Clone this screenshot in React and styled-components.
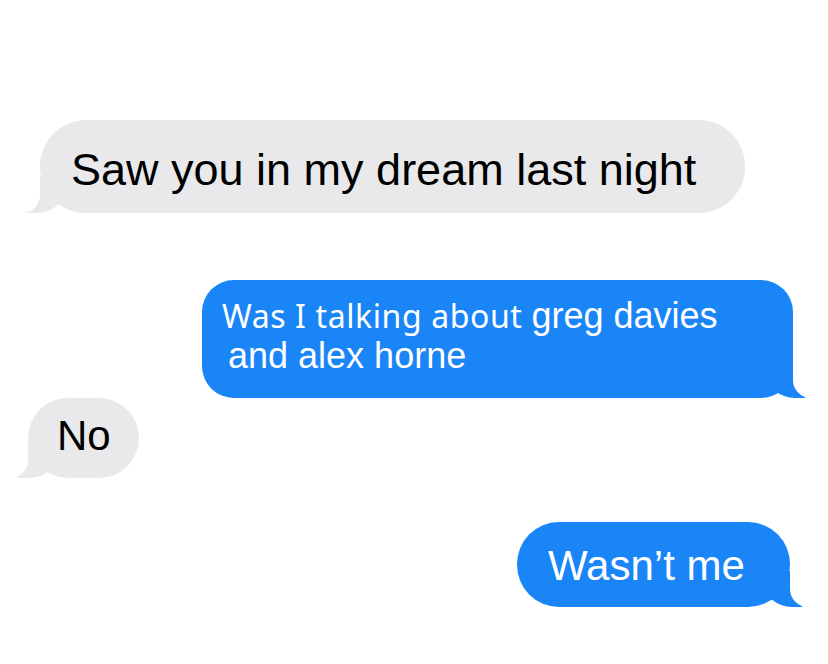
import React from 'react';
import styled, { createGlobalStyle, css } from 'styled-components';

const GlobalStyle = createGlobalStyle`
  html, body {
    margin: 0;
    padding: 0;
    background: #ffffff;
    overflow: hidden;
  }
  * {
    box-sizing: border-box;
  }
`;

const GRAY = '#e9e9eb';
const BLUE = '#1a85f7';

const Thread = styled.div`
  width: 828px;
  height: 664px;
  padding-top: 120px;
  display: flex;
  flex-direction: column;
  font-family: "Liberation Sans", Arial, sans-serif;
  background: #ffffff;
`;

const Row = styled.div`
  display: flex;
  justify-content: ${(p) => (p.$mine ? 'flex-end' : 'flex-start')};
  margin-top: ${(p) => p.$top || 0}px;
`;

const leftTail = css`
  &::before {
    content: '';
    position: absolute;
    bottom: 0;
    left: ${(p) => -p.$tip}px;
    width: 40px;
    height: 36px;
    background: ${GRAY};
    border-bottom-right-radius: 28px 25px;
  }
  &::after {
    content: '';
    position: absolute;
    bottom: 0;
    left: -40px;
    width: 40px;
    height: 36px;
    background: #ffffff;
    border-bottom-right-radius: 18px;
  }
`;

const rightTail = css`
  &::before {
    content: '';
    position: absolute;
    bottom: 0;
    right: ${(p) => -p.$tip}px;
    width: 38px;
    height: 36px;
    background: ${BLUE};
    border-bottom-left-radius: 28px 25px;
  }
  &::after {
    content: '';
    position: absolute;
    bottom: 0;
    right: -30px;
    width: 30px;
    height: 36px;
    background: #ffffff;
    border-bottom-left-radius: 18px;
  }
`;

const Bubble = styled.div`
  position: relative;
  width: ${(p) => p.$w}px;
  height: ${(p) => p.$h}px;
  margin: ${(p) => (p.$mine ? `0 ${p.$side}px 0 0` : `0 0 0 ${p.$side}px`)};
  padding: ${(p) => p.$pad};
  border-radius: ${(p) => p.$radius}px;
  background: ${(p) => (p.$mine ? BLUE : GRAY)};
  color: ${(p) => (p.$mine ? '#ffffff' : '#000000')};
  font-size: ${(p) => p.$size}px;
  line-height: ${(p) => p.$lh}px;
  white-space: nowrap;
  ${(p) => (p.$mine ? rightTail : leftTail)}
`;

const Text = styled.span`
  position: relative;
  z-index: 1;
`;

const PlexLike = styled.span`
  font-family: "Noto Sans", "Open Sans", sans-serif;
  font-size: 32px;
  letter-spacing: 0.6px;
`;

const Indent = styled.span`
  padding-left: 6px;
`;

export default function App() {
  return (
    <>
      <GlobalStyle />
      <Thread>
        <Row>
          <Bubble $side={40} $w={705} $h={93} $radius={46} $size={45} $lh={45} $pad="27px 0 0 31px" $tip={15}>
            <Text>Saw you in my dream last night</Text>
          </Bubble>
        </Row>
        <Row $mine $top={67}>
          <Bubble $mine $side={35} $w={591} $h={118} $radius={32} $size={36} $lh={40} $pad="16px 0 0 20px" $tip={12}>
            <Text>
              <PlexLike>Was I talking about </PlexLike>greg davies
              <br />
              <Indent>and alex horne</Indent>
            </Text>
          </Bubble>
        </Row>
        <Row>
          <Bubble $side={28} $w={111} $h={80} $radius={40} $size={42} $lh={42} $pad="17px 0 0 29px" $tip={11}>
            <Text>No</Text>
          </Bubble>
        </Row>
        <Row $mine $top={44}>
          <Bubble $mine $side={38} $w={273} $h={85} $radius={42} $size={42} $lh={42} $pad="23px 0 0 31px" $tip={12}>
            <Text>Wasn’t me</Text>
          </Bubble>
        </Row>
      </Thread>
    </>
  );
}
